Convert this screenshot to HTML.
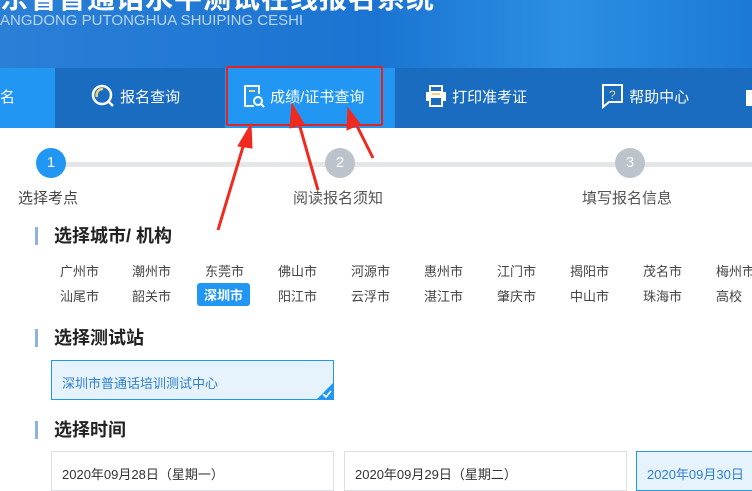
<!DOCTYPE html>
<html><head><meta charset="utf-8"><style>
*{margin:0;padding:0;box-sizing:border-box}
body{width:752px;height:476px;overflow:hidden;background:#fff;font-family:"Liberation Sans","Noto Sans CJK SC",sans-serif;position:relative}
.hdr{position:absolute;left:0;top:0;width:752px;height:68px;background:linear-gradient(90deg,#2a7fd6 0%,#1b74d2 50%,#2b8fe2 75%,#1c7ad6 100%)}
.t1{position:absolute;left:0;top:-23px;color:#fff;font-size:28px;font-weight:bold;white-space:nowrap;letter-spacing:1px}
.t2{position:absolute;left:0;top:12px;color:#b7d5f3;font-size:15px;white-space:nowrap}
.nav{position:absolute;left:0;top:68px;width:752px;height:60px;background:#1a6cc0}
.it{position:absolute;top:0;height:60px;color:#fff;font-size:15px;line-height:60px;white-space:nowrap}
.hl{background:#2196f3}
.red{position:absolute;left:226px;top:66px;width:157px;height:60px;border:2px solid #e5231d;border-radius:2px}
.step{position:absolute;width:30px;height:30px;border-radius:50%;color:#fff;font-size:15px;text-align:center;line-height:30px;top:148px}
.sl{position:absolute;top:158px;font-size:15px;color:#444;white-space:nowrap}
.h{position:absolute;left:35px;font-size:18px;font-weight:bold;color:#222;padding-left:16px;border-left:3px solid #8fb4dc;line-height:18px}
.c{position:absolute;font-size:13px;color:#444;white-space:nowrap}
</style></head><body>
<div class="hdr">
<div class="t1">东省普通话水平测试在线报名系统</div>
<div class="t2">ANGDONG PUTONGHUA SHUIPING CESHI</div>
</div>
<div class="nav">
<div class="it hl" style="left:0;width:55px">名</div>
<div class="it hl" style="left:225px;width:170px"></div>
<div class="it" style="left:90px">
<svg width="26" height="26" style="vertical-align:middle;margin-top:-4px" viewBox="0 0 26 26"><circle cx="12" cy="12" r="9" fill="none" stroke="#fff" stroke-width="2.5"/><path d="M7 14a6 6 0 0 1 6-8" stroke="#f3d37a" stroke-width="2.5" fill="none"/><path d="M18 18l5 5" stroke="#fff" stroke-width="2.5"/></svg> 报名查询</div>
<div class="it" style="left:242px">
<svg width="24" height="26" style="vertical-align:middle;margin-top:-4px" viewBox="0 0 24 26"><path d="M12 23H3V3h14v8" stroke="#fff" stroke-width="2" fill="none"/><path d="M7 8h6" stroke="#f3d37a" stroke-width="2"/><circle cx="16" cy="18" r="4" stroke="#fff" stroke-width="2" fill="none"/><path d="M19 21l3 3" stroke="#fff" stroke-width="2"/></svg> 成绩/证书查询</div>
<div class="it" style="left:424px">
<svg width="24" height="24" style="vertical-align:middle;margin-top:-4px" viewBox="0 0 24 24"><rect x="2" y="8" width="20" height="9" fill="#fff"/><rect x="6" y="2" width="12" height="6" fill="none" stroke="#fff" stroke-width="2"/><rect x="6" y="13" width="12" height="9" fill="#1a6cc0" stroke="#fff" stroke-width="2"/><path d="M8 10h8" stroke="#f3d37a" stroke-width="2"/></svg> 打印准考证</div>
<div class="it" style="left:601px">
<svg width="24" height="26" style="vertical-align:middle;margin-top:-4px" viewBox="0 0 24 26"><path d="M2 2h19v17H8l-6 5z" stroke="#fff" stroke-width="2" fill="none"/><text x="8" y="16" font-size="12" fill="#f3d37a" font-family="Liberation Sans">?</text></svg> 帮助中心</div>
<div class="it" style="left:746px;width:6px;"><div style="margin-top:22px;width:6px;height:16px;background:#fff"></div></div>
</div>
<div class="red"></div>
<div style="position:absolute;left:52px;top:162px;width:700px;height:5px;background:#e4e6e8"></div>
<div class="step" style="left:36px;background:#2196f3">1</div>
<div class="step" style="left:325px;background:#bcc3cb">2</div>
<div class="step" style="left:615px;background:#bcc3cb">3</div>
<div class="sl" style="left:18px;top:187px">选择考点</div>
<div class="sl" style="left:293px;top:187px;color:#555">阅读报名须知</div>
<div class="sl" style="left:582px;top:187px;color:#555">填写报名信息</div>
<div class="h" style="top:227px">选择城市/ 机构</div>
<div class="c" style="left:60px;top:261px">广州市</div><div class="c" style="left:132px;top:261px">潮州市</div><div class="c" style="left:205px;top:261px">东莞市</div><div class="c" style="left:278px;top:261px">佛山市</div><div class="c" style="left:351px;top:261px">河源市</div><div class="c" style="left:424px;top:261px">惠州市</div><div class="c" style="left:497px;top:261px">江门市</div><div class="c" style="left:570px;top:261px">揭阳市</div><div class="c" style="left:643px;top:261px">茂名市</div><div class="c" style="left:716px;top:261px">梅州市</div>
<div class="c" style="left:60px;top:286px">汕尾市</div><div class="c" style="left:132px;top:286px">韶关市</div>
<div class="c" style="left:197px;top:283px;background:#2196f3;color:#fff;font-weight:bold;padding:2px 7px;border-radius:3px">深圳市</div>
<div class="c" style="left:278px;top:286px">阳江市</div><div class="c" style="left:351px;top:286px">云浮市</div><div class="c" style="left:424px;top:286px">湛江市</div><div class="c" style="left:497px;top:286px">肇庆市</div><div class="c" style="left:570px;top:286px">中山市</div><div class="c" style="left:643px;top:286px">珠海市</div><div class="c" style="left:716px;top:286px">高校</div>
<div class="h" style="top:329px">选择测试站</div>
<div style="position:absolute;left:51px;top:360px;width:283px;height:40px;background:#e6f3fd;border:1px solid #2196f3;overflow:hidden">
<div class="c" style="left:10px;top:12px;color:#2f7fd0">深圳市普通话培训测试中心</div>
<div style="position:absolute;right:-1px;bottom:-1px;width:0;height:0;border-left:18px solid transparent;border-bottom:18px solid #2196f3"></div>
<svg style="position:absolute;right:1px;bottom:1px" width="10" height="8" viewBox="0 0 10 8"><path d="M1 4l3 3 5-6" stroke="#fff" stroke-width="1.6" fill="none"/></svg>
</div>
<div class="h" style="top:421px">选择时间</div>
<div style="position:absolute;left:51px;top:451px;width:283px;height:40px;border:1px solid #dcdfe3"><div class="c" style="left:10px;top:12px;color:#333">2020年09月28日（星期一）</div></div>
<div style="position:absolute;left:344px;top:451px;width:283px;height:40px;border:1px solid #dcdfe3"><div class="c" style="left:10px;top:12px;color:#333">2020年09月29日（星期二）</div></div>
<div style="position:absolute;left:636px;top:451px;width:140px;height:40px;border:1px solid #2196f3;background:#e6f3fd"><div class="c" style="left:10px;top:12px;color:#2f7fd0">2020年09月30日</div></div>
<svg style="position:absolute;left:0;top:0" width="752" height="476">
<g fill="#f02a1e" stroke="#f02a1e">
<path d="M218 230L245 140" stroke-width="3"/><path d="M251 124L238 146L252 148z"/>
<path d="M318 190L298 120" stroke-width="3"/><path d="M292 104L290 128L304 124z"/>
<path d="M373 158L355 122" stroke-width="3"/><path d="M348 108L347 130L360 124z"/>
</g></svg>
</body></html>
